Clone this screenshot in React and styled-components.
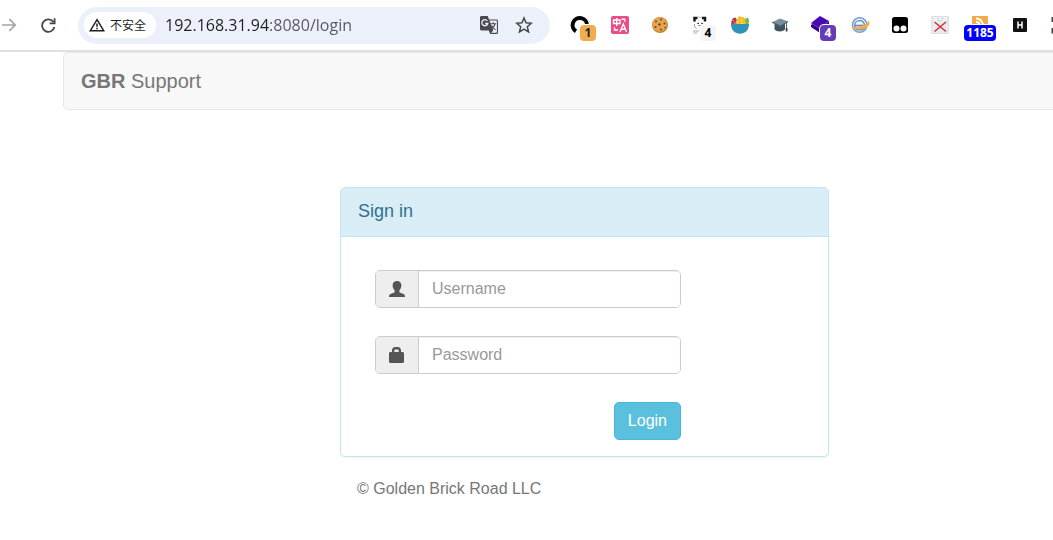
import React from "react";
import styled, { createGlobalStyle } from "styled-components";

const GlobalStyle = createGlobalStyle`
  *, *::before, *::after { box-sizing: border-box; }
  body {
    margin: 0;
    background: #fff;
    color: #777;
    font-family: "Liberation Sans", Arial, sans-serif;
    font-size: 16px;
    line-height: 24px;
  }
  button, input { font: inherit; }
`;

/* ---------- browser toolbar ---------- */

const Toolbar = styled.header`
  display: flex;
  align-items: center;
  gap: 10px;
  height: 52px;
  border-bottom: 2px solid #e0e0e0;
  overflow: hidden;
`;

const NavButton = styled.button`
  flex: none;
  display: flex;
  align-items: center;
  justify-content: center;
  width: ${(p) => p.$width};
  height: 40px;
  padding: 0;
  border: 0;
  background: none;
  color: ${(p) => p.$color || "#474747"};

  svg { display: block; }
`;

const AddressBar = styled.div`
  flex: 1 1 0;
  min-width: 0;
  display: flex;
  align-items: center;
  height: 37px;
  padding: 0 10px 0 6px;
  border-radius: 19px;
  background: #ecf0fa;
`;

const SecurityChip = styled.button`
  flex: none;
  display: flex;
  align-items: center;
  gap: 5px;
  height: 26px;
  padding: 0 10px 0 5px;
  border: 0;
  border-radius: 13px;
  background: #fff;
  color: #1f1f1f;
  font-family: "Noto Sans CJK SC", sans-serif;
  font-size: 12px;
  line-height: 16px;
  white-space: nowrap;
`;

const UrlInput = styled.input`
  flex: 1 1 0;
  min-width: 0;
  height: 28px;
  margin-left: 9px;
  padding: 0;
  border: 0;
  outline: 0;
  color: #303338;
  background: linear-gradient(90deg, #1f1f1f 104px, #54575c 104px);
  background-clip: text;
  -webkit-background-clip: text;
  -webkit-text-fill-color: transparent;
  font-family: "Open Sans", "Noto Sans", sans-serif;
  font-size: 16px;
  line-height: 24px;
`;

const Extensions = styled.div`
  flex: 0 0 493px;
  display: flex;
  overflow: hidden;
`;

const ExtensionButton = styled.button`
  position: relative;
  flex: none;
  width: 40px;
  height: 40px;
  padding: 0;
  border: 0;
  background: none;

  svg { display: block; }
`;

const Badge = styled.span`
  position: absolute;
  top: 20px;
  left: ${(p) => (p.$wide ? "4px" : "20px")};
  width: ${(p) => (p.$wide ? "32px" : "16px")};
  height: 16px;
  border-radius: 4px;
  background: ${(p) => p.$bg};
  color: ${(p) => p.$color};
  box-shadow: 0 0 0 1px #fff;
  font-family: "Open Sans", sans-serif;
  font-size: 12px;
  font-weight: 700;
  line-height: 16px;
  text-align: center;
`;

/* ---------- login page ---------- */

const Page = styled.div`
  padding-left: 63px;
`;

const Navbar = styled.nav`
  display: flex;
  align-items: center;
  height: 58px;
  padding: 0 17px;
  border: 1px solid #e7e7e7;
  border-right: 0;
  border-radius: 5px 0 0 5px;
  background: #f8f8f8;
`;

const Brand = styled.a`
  color: #777;
  font-size: 20px;
  line-height: 24px;
  text-decoration: none;
`;

const Main = styled.main`
  display: grid;
  grid-template-columns: 277fr 489fr 224fr;
  padding-top: 77px;
`;

const Column = styled.div`
  grid-column: 2;
`;

const Panel = styled.section`
  border: 1px solid #bce8f1;
  border-radius: 5px;
  background: #fff;
  box-shadow: 0 1px 1px rgba(0, 0, 0, 0.05);
`;

const PanelHeading = styled.div`
  padding: 11px 17px 13px;
  border-bottom: 1px solid #bce8f1;
  border-radius: 4px 4px 0 0;
  background: #d9edf7;
`;

const PanelTitle = styled.h1`
  margin: 0;
  color: #31708f;
  font-size: 18px;
  font-weight: 400;
  line-height: 24px;
`;

const LoginForm = styled.form`
  display: flex;
  flex-direction: column;
  gap: 28px;
  max-width: 340px;
  padding: 33px 0 16px 34px;
`;

const InputGroup = styled.div`
  display: flex;
  height: 38px;
  border: 1px solid #ccc;
  border-radius: 5px;
  overflow: hidden;
`;

const Addon = styled.label`
  flex: none;
  display: flex;
  align-items: center;
  justify-content: center;
  width: 43px;
  border-right: 1px solid #ccc;
  background: #eee;
  color: #555;
`;

const TextInput = styled.input`
  flex: 1 1 0;
  min-width: 0;
  padding: 0 13px;
  border: 0;
  outline: 0;
  background: #fff;
  box-shadow: inset 0 1px 1px rgba(0, 0, 0, 0.075);
  color: #555;

  &::placeholder { color: #999; opacity: 1; }
`;

const LoginButton = styled.button`
  align-self: flex-end;
  height: 38px;
  padding: 0 13px;
  border: 1px solid #46b8da;
  border-radius: 5px;
  background: #5bc0de;
  color: #fff;
`;

const Copyright = styled.p`
  margin: 20px 0 0;
  padding: 0 17px;
`;

/* ---------- icons ---------- */

const ForwardIcon = () => (
  <svg width="16" height="16" viewBox="0 0 16 16" fill="none" stroke="currentColor" strokeWidth="1.7">
    <path d="M1 8h13M8.3 2.2 14.2 8l-5.900 5.800" />
  </svg>
);

const ReloadIcon = () => (
  <svg width="16" height="16" viewBox="0 0 16 16" fill="none" stroke="currentColor" strokeWidth="1.800">
    <path d="M13.600 5.300A6.200 6.200 0 1 0 14.400 10" />
    <path d="M14.600 1.200v5.200H9.600" />
  </svg>
);

const WarningIcon = () => (
  <svg width="16" height="14" viewBox="0 0 16 14" fill="none" stroke="currentColor" strokeWidth="1.5">
    <path d="M8 1.6 14.7 12.7H1.3z" />
    <path d="M8 5.4v3.3M8 9.8v1.5" />
  </svg>
);

const TranslateIcon = () => (
  <svg width="20" height="20" viewBox="0 0 20 20">
    <path d="M2.5 1h6.3l1.2 3.4h7.5c.9 0 1.5.6 1.5 1.5v11.6c0 .9-.6 1.5-1.5 1.5h-6.3l-1.3-3.6H2.5C1.6 15.400 1 14.800 1 13.900V2.500C1 1.600 1.600 1 2.500 1z" fill="#474a50" />
    <path d="M10.500 5.600h6.900c.3 0 .5.2.5.5v11.200c0 .3-.2.5-.5.5h-5.300l2.100-2.400z" fill="#ecf0fa" />
    <path d="M8.300 5.900A3 3 0 1 0 8.800 8.500H6.200" fill="none" stroke="#ecf0fa" strokeWidth="1.300" />
    <path d="M11.200 8.800h6M14.200 7.300v1.500M16.100 8.900c-.6 2.300-1.900 3.900-3.600 5.100M12.500 10.500c.8 1.700 2 3.100 4 4.300" fill="none" stroke="#474a50" strokeWidth="1.100" />
    <path d="m10 15.400 3 0-1.800 2.500z" fill="#474a50" />
  </svg>
);

const StarIcon = () => (
  <svg width="18" height="18" viewBox="0 0 18 18" fill="none" stroke="currentColor" strokeWidth="1.500">
    <path d="m9 2 2 4.800 5.200.5-3.900 3.400 1.200 5.200L9 13.200l-4.500 2.700 1.200-5.200-3.900-3.400 5.200-.5z" />
  </svg>
);

const UserIcon = () => (
  <svg width="16" height="16" viewBox="0 0 16 16" fill="currentColor">
    <path d="M8 0c2.700 0 4.400 1.700 4.400 4.300 0 2-.8 3.900-2 5v1.400c0 .6.400.8 1 1.100l3.200 1.300c.9.400 1.400 1.300 1.400 2.900H0c0-1.600.5-2.500 1.400-2.900l3.200-1.300c.6-.3 1-.5 1-1.100V9.300c-1.200-1.100-2-3-2-5C3.600 1.700 5.300 0 8 0z" />
  </svg>
);

const LockIcon = () => (
  <svg width="16" height="16" viewBox="0 0 16 16" fill="currentColor">
    <path fillRule="evenodd" d="M3 5V3.300C3 1.300 4.300 0 6.300 0h2.400c2 0 3.300 1.300 3.300 3.300V5h1.500c.9 0 1.500.6 1.500 1.500v8c0 .9-.6 1.500-1.500 1.500h-12C.6 16 0 15.400 0 14.500v-8C0 5.600.6 5 1.500 5zm2.300 0h4.400V3.700c0-.7-.4-1.100-1.100-1.100H6.400c-.7 0-1.100.4-1.100 1.100z" />
  </svg>
);

/* Drawings for the extension buttons, all on a 40 by 40 grid. */
const artwork = {
  ring: (
    <path d="M16 26.300A7.200 7.200 0 1 1 27 20.500" fill="none" stroke="#050505" strokeWidth="4" />
  ),
  translate: (
    <>
      <rect x="11" y="11" width="18" height="18" rx="2" fill="#ea4c89" />
      <path d="M13.500 15h6.500v3.500h-6.500zM16.700 13v8M21.500 14.200h3.200v2.600M14.500 22.500v2.500h3.500M20 27l3.300-8 3.300 8M21.300 24.300h4" fill="none" stroke="#fff" strokeWidth="1.400" />
    </>
  ),
  cookie: (
    <>
      <circle cx="20" cy="20" r="8" fill="#c9822f" />
      <circle cx="19.600" cy="19.300" r="7.200" fill="#e3a552" />
      <g fill="#78431d">
        <circle cx="16" cy="16.500" r="1" /><circle cx="21" cy="14.500" r="1" />
        <circle cx="19.500" cy="19.500" r="1.200" /><circle cx="24.500" cy="18.500" r="1" />
        <circle cx="15.500" cy="22" r="1.100" /><circle cx="21" cy="24.500" r="1" />
        <circle cx="25" cy="22.500" r=".8" />
      </g>
    </>
  ),
  panda: (
    <>
      <path d="M14.500 16.500v-3.500h3M22 13h3v3.500" fill="none" stroke="#171717" strokeWidth="2.500" />
      <path d="M18 12.200h4" stroke="#bbb" />
      <path d="M14.500 19v2.500l2 2" fill="none" stroke="#999" />
      <path d="M16.500 18.500l2.500-1v1.500zM21 17.500l2.500 1-2 .7z" fill="#222" />
      <path d="M18.500 20.500h3" stroke="#777" />
      <path d="M13 26h6M13.500 28h4" stroke="#aaa" />
    </>
  ),
  bowl: (
    <>
      <path d="M11.500 20c-1-4 1-7.500 4-7.500L20 20z" fill="#a83c4a" />
      <path d="M23 20c0-4 2-6.500 5-7.500 1.500 2.500 1 5 0 8z" fill="#69b95a" />
      <path d="M16 20c-1-3 0-5 1.500-5.500 0-3 2.500-4 4-2.500 3-.5 4.500 2 3.500 4 1.500 1 1 3 0 4z" fill="#f6bd28" />
      <path d="M18 17h.1M21.500 15.500h.1M22 18.500h.1" stroke="#fff1a8" strokeWidth="1.500" strokeLinecap="round" />
      <path d="M13 15.500h.1M14.500 18h.1" stroke="#e88690" strokeWidth="1.500" strokeLinecap="round" />
      <path d="M11 19h18c0 6-4 9.800-9 9.800S11 25 11 19z" fill="#2e93b5" />
    </>
  ),
  cap: (
    <>
      <path d="M14.500 19v5.500c2.500 2.500 8 2.500 10.500 0V19z" fill="#40545f" />
      <path d="m12 17.300 8-3.800 8 3-7.500 4.500z" fill="#78909c" />
      <path d="m12 17.300 8.500 3.700 7.500-4.500" fill="none" stroke="#4f646f" strokeWidth="1.200" />
      <path d="M26.500 18v6" stroke="#546e7a" strokeWidth="1" />
      <path d="M25.700 23h1.800v3.500h-1.800z" fill="#424242" />
    </>
  ),
  layers: (
    <>
      <path d="m20 11 9 5-9 7-9-5z" fill="#4b09b4" />
      <path d="m11 20 2-1.500L20 23l9-7v4l-9 8-9-6z" fill="#35008c" />
      <path d="m11.300 18.300 8.700 5.200 9-7" fill="none" stroke="#7541c4" strokeWidth=".8" />
    </>
  ),
  explorer: (
    <>
      <circle cx="19.700" cy="20" r="7.200" fill="#edf4fc" stroke="#7d9fce" strokeWidth="1.600" />
      <path d="M14.500 20.500h10c0-3-2-4.800-4.800-4.800-3 0-5 2-5 4.600s2 4.700 5.300 4.700c2 0 3.500-.8 4.400-2.200" fill="none" stroke="#5787c2" strokeWidth="1.300" />
      <path d="M12 22.500c4 2 15-2 16.500-4.800.7 3-4.500 5.600-10 6.300" fill="none" stroke="#eeae43" strokeWidth="1.800" />
    </>
  ),
  monkey: (
    <>
      <rect x="12" y="12" width="16" height="16" rx="2.500" fill="#000" />
      <circle cx="16.500" cy="23.500" r="3" fill="#fff" />
      <circle cx="23.500" cy="23.500" r="3" fill="#fff" />
    </>
  ),
  crossed: (
    <>
      <rect x="11.500" y="11.500" width="17" height="17" fill="#e6ebef" stroke="#dde1e5" />
      <path d="M14 12.500h12v4H14z" fill="#f2f4f5" />
      <path d="M17 13.500h2M21 13.500h3M17 15.500h5" stroke="#cfd3d8" />
      <path d="m14.500 17 11.500 9.500M26 17l-11.500 9.500" stroke="#d92c38" strokeWidth="1.500" />
    </>
  ),
  feed: (
    <>
      <rect x="12" y="11" width="16" height="17" rx="1" fill="#f4aa4b" />
      <path d="M16 13.500c4 0 7 3 7 7M16 17c2 0 3.500 1.500 3.500 3.500" fill="none" stroke="#fff" strokeWidth="2" />
    </>
  ),
  letter: (
    <>
      <rect x="13" y="13" width="14" height="14" rx="1" fill="#101010" />
      <path d="M18 16.500v7M22 16.500v7M18 20h4" fill="none" stroke="#fff" strokeWidth="1.500" />
    </>
  ),
  frame: (
    <path d="M17 13h-4.500v4M12.500 23v4.500H17M23 13h4.500v4M27.500 23v4.500H23" fill="none" stroke="#3f4246" strokeWidth="2" />
  ),
};

const extensions = [
  { art: "ring", label: "Session", badge: "1", bg: "#f0ad4e", color: "#222" },
  { art: "translate", label: "Translate" },
  { art: "cookie", label: "Cookies" },
  { art: "panda", label: "Panda", badge: "4", bg: "#f5f5f5", color: "#000" },
  { art: "bowl", label: "Salad bowl" },
  { art: "cap", label: "Scholar" },
  { art: "layers", label: "Layers", badge: "4", bg: "#673ab7", color: "#fff" },
  { art: "explorer", label: "Explorer" },
  { art: "monkey", label: "Scripts" },
  { art: "crossed", label: "Blocked page" },
  { art: "feed", label: "Feeds", badge: "1185", bg: "#0000ff", color: "#fff", wide: true },
  { art: "letter", label: "H" },
  { art: "frame", label: "Capture" },
];

export default function App() {
  return (
    <>
      <GlobalStyle />
      <Toolbar>
        <NavButton type="button" aria-label="Forward" $width="18px" $color="#a3a3a3">
          <ForwardIcon />
        </NavButton>
        <NavButton type="button" aria-label="Reload" $width="40px">
          <ReloadIcon />
        </NavButton>
        <AddressBar>
          <SecurityChip type="button">
            <WarningIcon />
            不安全
          </SecurityChip>
          <UrlInput aria-label="Address" defaultValue="192.168.31.94:8080/login" spellCheck={false} />
          <NavButton type="button" aria-label="Translate this page" $width="38px">
            <TranslateIcon />
          </NavButton>
          <NavButton type="button" aria-label="Bookmark" $width="32px">
            <StarIcon />
          </NavButton>
        </AddressBar>
        <Extensions>
          {extensions.map((e) => (
            <ExtensionButton key={e.label} type="button" aria-label={e.label}>
              <svg width="40" height="40" viewBox="0 0 40 40">{artwork[e.art]}</svg>
              {e.badge && (
                <Badge $bg={e.bg} $color={e.color} $wide={e.wide}>{e.badge}</Badge>
              )}
            </ExtensionButton>
          ))}
        </Extensions>
      </Toolbar>

      <Page>
        <Navbar>
          <Brand href="#"><strong>GBR</strong> Support</Brand>
        </Navbar>
        <Main>
          <Column>
            <Panel>
              <PanelHeading>
                <PanelTitle>Sign in</PanelTitle>
              </PanelHeading>
              <LoginForm onSubmit={(e) => e.preventDefault()}>
                <InputGroup>
                  <Addon htmlFor="username" aria-label="Username"><UserIcon /></Addon>
                  <TextInput id="username" type="text" placeholder="Username" />
                </InputGroup>
                <InputGroup>
                  <Addon htmlFor="password" aria-label="Password"><LockIcon /></Addon>
                  <TextInput id="password" type="password" placeholder="Password" />
                </InputGroup>
                <LoginButton type="submit">Login</LoginButton>
              </LoginForm>
            </Panel>
            <Copyright>© Golden Brick Road LLC</Copyright>
          </Column>
        </Main>
      </Page>
    </>
  );
}
